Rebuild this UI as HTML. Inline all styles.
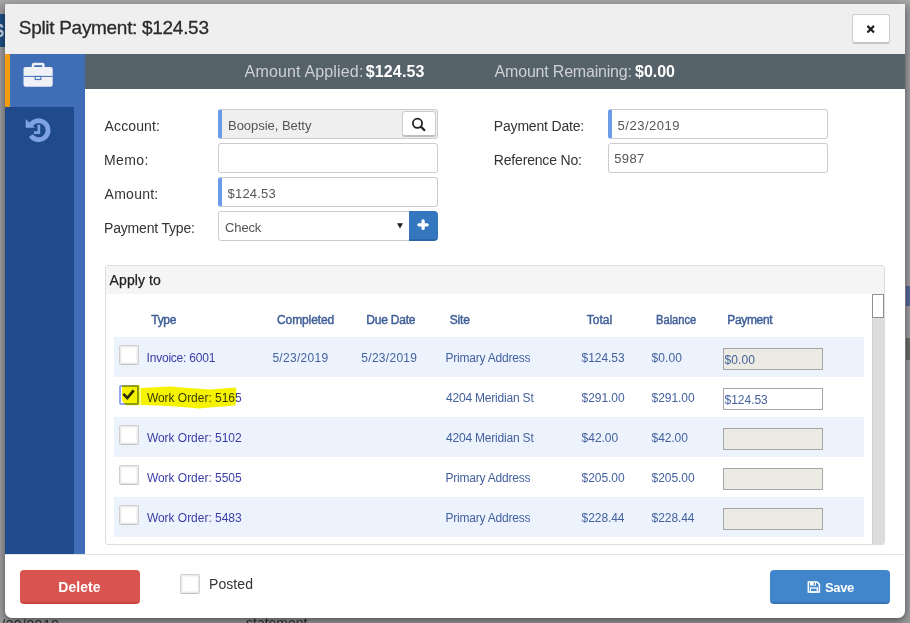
<!DOCTYPE html>
<html><head><meta charset="utf-8"><title>Split Payment</title>
<style>
*{box-sizing:border-box;margin:0;padding:0}
html,body{width:910px;height:623px;overflow:hidden}
body{background:#9d9da0;font-family:"Liberation Sans",sans-serif;font-size:14px;color:#333;position:relative}
.a{position:absolute;white-space:nowrap;line-height:1}
.p{position:absolute}
#modal{left:5px;top:4px;width:900px;height:614px;background:#fff;border-radius:2px 1px 7px 7px;box-shadow:0 3px 9px rgba(0,0,0,.5);overflow:hidden}
#hdr{left:0;top:0;width:900px;height:50px;background:#efefef}
#close{left:852px;top:14px;width:38px;height:30px;background:#fff;border:1px solid #cdcdcd;border-bottom:2px solid #c6c6c6;border-radius:3px}
.inp{position:absolute;height:30px;border:1px solid #ccc;background:#fff;border-radius:3px}
.req{border-left:4px solid #6b9be9}
#panel{left:105px;top:265px;width:780px;height:280px;border:1px solid #ddd;border-radius:3px;background:#fff;overflow:hidden}
.row{position:absolute;left:114px;width:750px;height:40px;background:#ecf3fd}
.cb{position:absolute;width:20px;height:20px;background:#fff;border:1px solid #cfcfcf;border-bottom-color:#c2c2c2;border-radius:2px;box-shadow:inset 0 0 0 1.5px #ebebeb}
.pin{position:absolute;left:723px;width:100px;height:22px;border:1px solid #a6a6a6;background:#ebebe4}
.btn{position:absolute;border-radius:4px;height:34px;width:120px}
</style></head><body>
<!-- page behind the dialog -->
<div class="p" style="left:0;top:14px;width:5px;height:33px;background:#1f4e85"></div>
<div class="p" style="left:0;top:0;width:910px;height:4px;background:#a6a6a6"></div>
<div class="a" style="left:-6px;top:22px;font-size:18px;font-weight:bold;color:#c9d6e6">$</div>
<div class="a" style="left:1px;top:617px;font-size:15px;color:#2e2e2e">/30/2019</div>
<div class="a" style="left:246px;top:616px;font-size:14px;color:#2e2e2e">statement</div>

<div class="p" style="left:906px;top:286px;width:4px;height:20px;background:#55669c"></div>
<div class="p" style="left:906px;top:338px;width:4px;height:22px;background:#6b6b6b"></div>
<div id="modal" class="p"><div id="hdr" class="p"></div></div>
<div id="close" class="p"></div>

<!-- side tabs -->
<div class="p" style="left:5px;top:54px;width:80px;height:500px;background:#3f6db6"></div>
<div class="p" style="left:5px;top:107px;width:69px;height:447px;background:#1f4b8d"></div>
<div class="p" style="left:5px;top:54px;width:5px;height:53px;background:#f39c12"></div>
<!-- totals bar -->
<div class="p" style="left:85px;top:54px;width:820px;height:35px;background:#566269"></div>

<!-- form fields -->
<div class="inp req" style="left:218px;top:109px;width:220px;background:#efefef"></div>
<div class="p" style="left:402px;top:111px;width:34px;height:26px;background:#fff;border:1px solid #ccc;border-bottom:2px solid #bdbdbd;border-radius:3px"></div>
<div class="inp" style="left:218px;top:143px;width:220px"></div>
<div class="inp req" style="left:218px;top:177px;width:220px"></div>
<div class="inp" style="left:218px;top:211px;width:192px;border-radius:3px 0 0 3px"></div>
<div class="p" style="left:409px;top:211px;width:29px;height:30px;background:#3577bf;border-radius:0 4px 4px 0;border-bottom:2px solid #2c66a6"></div>
<div class="inp req" style="left:608px;top:109px;width:220px"></div>
<div class="inp" style="left:608px;top:143px;width:220px"></div>

<!-- apply-to panel -->
<div id="panel" class="p">
 <div class="p" style="left:0;top:0;width:778px;height:28px;background:#f5f5f5"></div>
 <div class="p" style="left:766px;top:28px;width:12px;height:251px;background:#dcdcdc;border-left:1px solid #cfcfcf"></div>
 <div class="p" style="left:766px;top:28px;width:12px;height:24px;background:#fff;border:1px solid #909090"></div>
</div>
<div class="row" style="top:337px"></div>
<div class="row" style="top:417px"></div>
<div class="row" style="top:497px"></div>
<div class="cb" style="left:119px;top:345px"></div>
<div class="cb" style="left:119px;top:385px;border:2px solid #93a5f2;box-shadow:none"></div>
<div class="cb" style="left:119px;top:425px"></div>
<div class="cb" style="left:119px;top:465px"></div>
<div class="cb" style="left:119px;top:505px"></div>
<div class="pin" style="top:348px"></div>
<div class="pin" style="top:388px;background:#fff"></div>
<div class="pin" style="top:428px"></div>
<div class="pin" style="top:468px"></div>
<div class="pin" style="top:508px"></div>

<!-- footer -->
<div class="p" style="left:5px;top:554px;width:900px;height:1px;background:#e5e5e5"></div>
<div class="btn" style="left:20px;top:570px;background:#d9534f;border-bottom:2px solid #c9433f"></div>
<div class="cb" style="left:180px;top:574px"></div>
<div class="btn" style="left:770px;top:570px;background:#4185cb;border-bottom:2px solid #3674b8"></div>

<div class="a" style="left:18.8px;top:18px;font-size:19px;font-weight:normal;color:#2a2a2a;letter-spacing:-0.30px;-webkit-text-stroke:0.3px #2a2a2a;">Split Payment: $124.53</div>
<div class="a" style="left:244.6px;top:64px;font-size:16px;font-weight:normal;color:#cdd1d4;letter-spacing:0.16px;">Amount Applied:</div>
<div class="a" style="left:365.7px;top:64px;font-size:16px;font-weight:bold;color:#fff;letter-spacing:0.15px;">$124.53</div>
<div class="a" style="left:494.6px;top:64px;font-size:16px;font-weight:normal;color:#cdd1d4;letter-spacing:-0.20px;">Amount Remaining:</div>
<div class="a" style="left:635.0px;top:64px;font-size:16px;font-weight:bold;color:#fff;letter-spacing:-0.02px;">$0.00</div>
<div class="a" style="left:104.6px;top:119px;font-size:14px;font-weight:normal;color:#333;letter-spacing:0.11px;">Account:</div>
<div class="a" style="left:104.0px;top:153px;font-size:14px;font-weight:normal;color:#333;letter-spacing:0.37px;">Memo:</div>
<div class="a" style="left:104.6px;top:187px;font-size:14px;font-weight:normal;color:#333;letter-spacing:0.25px;">Amount:</div>
<div class="a" style="left:104.0px;top:221px;font-size:14px;font-weight:normal;color:#333;letter-spacing:-0.18px;">Payment Type:</div>
<div class="a" style="left:493.8px;top:119px;font-size:14px;font-weight:normal;color:#333;letter-spacing:-0.18px;">Payment Date:</div>
<div class="a" style="left:493.8px;top:153px;font-size:14px;font-weight:normal;color:#333;letter-spacing:-0.18px;">Reference No:</div>
<div class="a" style="left:228.0px;top:119px;font-size:13px;font-weight:normal;color:#555;letter-spacing:-0.03px;">Boopsie, Betty</div>
<div class="a" style="left:227.5px;top:187px;font-size:13px;font-weight:normal;color:#555;letter-spacing:0.21px;">$124.53</div>
<div class="a" style="left:225.1px;top:221px;font-size:13px;font-weight:normal;color:#555;letter-spacing:-0.15px;">Check</div>
<div class="a" style="left:617.6px;top:119px;font-size:13px;font-weight:normal;color:#555;letter-spacing:0.51px;">5/23/2019</div>
<div class="a" style="left:614.2px;top:152px;font-size:13px;font-weight:normal;color:#555;letter-spacing:0.38px;">5987</div>
<div class="a" style="left:109.6px;top:273px;font-size:14px;font-weight:normal;color:#222;letter-spacing:0.10px;-webkit-text-stroke:0.25px #222;">Apply to</div>
<div class="a" style="left:151.3px;top:314px;font-size:12px;font-weight:normal;color:#3f5f98;letter-spacing:-0.31px;-webkit-text-stroke:0.45px #3f5f98;">Type</div>
<div class="a" style="left:277.0px;top:314px;font-size:12px;font-weight:normal;color:#3f5f98;letter-spacing:-0.10px;-webkit-text-stroke:0.45px #3f5f98;">Completed</div>
<div class="a" style="left:366.3px;top:314px;font-size:12px;font-weight:normal;color:#3f5f98;letter-spacing:-0.22px;-webkit-text-stroke:0.45px #3f5f98;">Due Date</div>
<div class="a" style="left:449.8px;top:314px;font-size:12px;font-weight:normal;color:#3f5f98;letter-spacing:-0.22px;-webkit-text-stroke:0.45px #3f5f98;">Site</div>
<div class="a" style="left:586.8px;top:314px;font-size:12px;font-weight:normal;color:#3f5f98;letter-spacing:-0.01px;-webkit-text-stroke:0.45px #3f5f98;">Total</div>
<div class="a" style="left:656.3px;top:314px;font-size:12px;font-weight:normal;color:#3f5f98;transform:scaleX(0.929);transform-origin:0 0;-webkit-text-stroke:0.45px #3f5f98;">Balance</div>
<div class="a" style="left:727.3px;top:314px;font-size:12px;font-weight:normal;color:#3f5f98;letter-spacing:-0.35px;-webkit-text-stroke:0.45px #3f5f98;">Payment</div>
<div class="a" style="left:146.6px;top:352px;font-size:12px;font-weight:normal;color:#3a3ea8;letter-spacing:-0.22px;">Invoice: 6001</div>
<div class="a" style="left:272.4px;top:352px;font-size:12px;font-weight:normal;color:#44619f;letter-spacing:0.29px;">5/23/2019</div>
<div class="a" style="left:361.3px;top:352px;font-size:12px;font-weight:normal;color:#44619f;letter-spacing:0.29px;">5/23/2019</div>
<div class="a" style="left:445.4px;top:352px;font-size:12px;font-weight:normal;color:#44619f;letter-spacing:-0.21px;">Primary Address</div>
<div class="a" style="left:581.6px;top:352px;font-size:12px;font-weight:normal;color:#44619f;letter-spacing:-0.06px;">$124.53</div>
<div class="a" style="left:651.6px;top:352px;font-size:12px;font-weight:normal;color:#44619f;letter-spacing:0.09px;">$0.00</div>
<div class="a" style="left:146.9px;top:392px;font-size:12px;font-weight:normal;color:#3a3ea8;letter-spacing:-0.03px;">Work Order: 5165</div>
<div class="a" style="left:446.0px;top:392px;font-size:12px;font-weight:normal;color:#44619f;letter-spacing:-0.20px;">4204 Meridian St</div>
<div class="a" style="left:581.6px;top:392px;font-size:12px;font-weight:normal;color:#44619f;letter-spacing:-0.07px;">$291.00</div>
<div class="a" style="left:651.6px;top:392px;font-size:12px;font-weight:normal;color:#44619f;letter-spacing:-0.07px;">$291.00</div>
<div class="a" style="left:146.9px;top:432px;font-size:12px;font-weight:normal;color:#3a3ea8;letter-spacing:-0.03px;">Work Order: 5102</div>
<div class="a" style="left:446.0px;top:432px;font-size:12px;font-weight:normal;color:#44619f;letter-spacing:-0.20px;">4204 Meridian St</div>
<div class="a" style="left:581.6px;top:432px;font-size:12px;font-weight:normal;color:#44619f;letter-spacing:-0.03px;">$42.00</div>
<div class="a" style="left:651.6px;top:432px;font-size:12px;font-weight:normal;color:#44619f;letter-spacing:-0.09px;">$42.00</div>
<div class="a" style="left:146.9px;top:472px;font-size:12px;font-weight:normal;color:#3a3ea8;letter-spacing:-0.03px;">Work Order: 5505</div>
<div class="a" style="left:445.4px;top:472px;font-size:12px;font-weight:normal;color:#44619f;letter-spacing:-0.21px;">Primary Address</div>
<div class="a" style="left:581.6px;top:472px;font-size:12px;font-weight:normal;color:#44619f;letter-spacing:-0.07px;">$205.00</div>
<div class="a" style="left:651.6px;top:472px;font-size:12px;font-weight:normal;color:#44619f;letter-spacing:-0.07px;">$205.00</div>
<div class="a" style="left:146.9px;top:512px;font-size:12px;font-weight:normal;color:#3a3ea8;letter-spacing:-0.03px;">Work Order: 5483</div>
<div class="a" style="left:445.4px;top:512px;font-size:12px;font-weight:normal;color:#44619f;letter-spacing:-0.21px;">Primary Address</div>
<div class="a" style="left:581.6px;top:512px;font-size:12px;font-weight:normal;color:#44619f;letter-spacing:-0.08px;">$228.44</div>
<div class="a" style="left:651.6px;top:512px;font-size:12px;font-weight:normal;color:#44619f;letter-spacing:-0.08px;">$228.44</div>
<div class="a" style="left:724.6px;top:354px;font-size:12px;font-weight:normal;color:#44609a;letter-spacing:0.06px;">$0.00</div>
<div class="a" style="left:724.6px;top:394px;font-size:12px;font-weight:normal;color:#44609a;letter-spacing:-0.04px;">$124.53</div>
<div class="a" style="left:58.2px;top:580px;font-size:14px;font-weight:bold;color:#fff;letter-spacing:0.09px;">Delete</div>
<div class="a" style="left:209.1px;top:577px;font-size:14px;font-weight:normal;color:#333;letter-spacing:0.05px;">Posted</div>
<div class="a" style="left:824.9px;top:581px;font-size:13px;font-weight:bold;color:#fff;letter-spacing:-0.30px;">Save</div>

<svg class="p" style="left:0;top:0" width="910" height="623" viewBox="0 0 910 623">
 <!-- yellow marker -->
 <g style="mix-blend-mode:multiply" fill="#f6f300">
  <path d="M140.6 388 L150 387.4 L169.6 386.6 L182 387.6 L193.3 388.2 L209 389.5 L222.3 388.6 L236.2 387.6 L236.4 396 L235.4 405.2 L226 406.2 L215.7 407 L198.6 408.4 L182.7 407 L163 405.7 L150 405.2 L140.6 405 Z"/>
  <path d="M122 385.4 L139.6 385 L139.6 405.2 L126 405.2 L122 400.5 Z"/>
 </g>
 <!-- check -->
 <path d="M123.3 393.9 L127.3 398 L133.7 390.4" fill="none" stroke="#2d2a05" stroke-width="2.7"/>
 <!-- briefcase -->
 <g fill="#f0f0f7">
  <rect x="23.5" y="66.9" width="29.2" height="19.9" rx="2.2"/>
  <path d="M33 67.5 V65 Q33 64 34 64 H42.4 Q43.4 64 43.4 65 V67.5" fill="none" stroke="#f0f0f7" stroke-width="2.5"/>
 </g>
 <rect x="23.5" y="75.9" width="29.2" height="1" fill="#3f6db6"/>
 <rect x="35.2" y="76.4" width="5.6" height="3.2" fill="#e2ecfa" stroke="#3f6db6" stroke-width="1"/>
 <!-- history -->
 <g fill="#7ea2e2" stroke="none">
  <path d="M30.5 125.2 A9.5 9.5 0 1 1 30.8 135.7" fill="none" stroke="#7ea2e2" stroke-width="4.8"/>
  <path d="M25.7 119 V127.7 H35 Z"/>
  <path d="M38.9 124.8 V132.6 H34" fill="none" stroke="#7ea2e2" stroke-width="2.6"/>
 </g>
 <!-- search -->
 <circle cx="417.5" cy="123.3" r="4.6" fill="none" stroke="#222" stroke-width="1.8"/>
 <path d="M421 126.8 L424.4 130.1" stroke="#222" stroke-width="2.2" stroke-linecap="round"/>
 <!-- select arrow -->
 <path d="M397 223.2 H403 L400 228.4 Z" fill="#222"/>
 <!-- plus -->
 <path d="M418.9 224.8 H427.2 M423.1 221 V228.4" stroke="#fff" stroke-width="3.3" stroke-linecap="round"/>
 <!-- close -->
 <path d="M867.4 25.9 L874 32.5 M874 25.9 L867.4 32.5" stroke="#222" stroke-width="2.2"/>
 <!-- save -->
 <g stroke="#fff" fill="none">
  <path d="M808.3 582 H817 L819.4 584.4 V592.1 H808.3 Z" stroke-width="1.5"/>
  <rect x="810.4" y="588" width="6.9" height="4" stroke-width="1.3"/>
  <path d="M810 582 H816 V585.6 H810 Z" fill="#fff" stroke="none"/>
  <rect x="813.7" y="582.6" width="1.3" height="2.4" fill="#4185cb" stroke="none"/>
 </g>
</svg>
</body></html>
